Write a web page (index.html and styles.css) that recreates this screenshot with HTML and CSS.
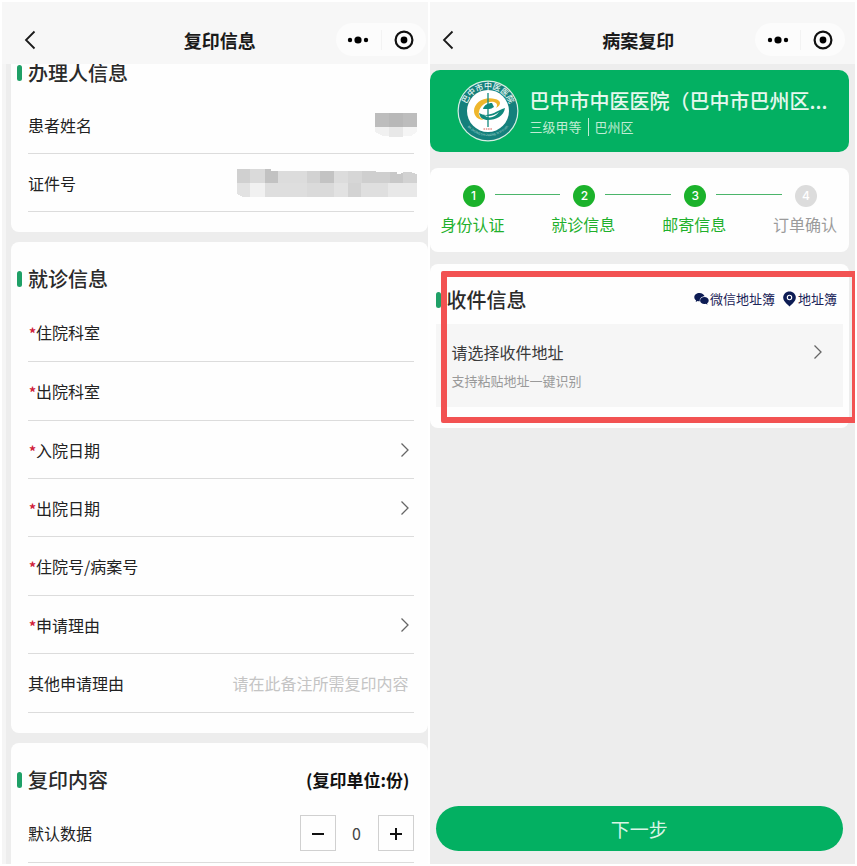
FILE: index.html
```html
<!DOCTYPE html>
<html lang="zh-CN">

<head>
    <title>病案复印</title>
    <meta charset="UTF-8">
    <meta name="viewport" content="width=device-width, initial-scale=1">
    <link rel="stylesheet" href="styles.css">
</head>

<body>
    <svg width="0" height="0" class="sprite" aria-hidden="true">
        <symbol id="icon-back" viewBox="0 0 12 20">
            <path d="M10.500 1.500 2 10l8.500 8.500" fill="none" stroke="#1a1a1a" stroke-width="1.800" />
        </symbol>
        <symbol id="icon-arrow" viewBox="0 0 10 16">
            <path d="M1.500 1.500 8 8l-6.500 6.500" fill="none" stroke="#666" stroke-width="1.300" />
        </symbol>
        <symbol id="icon-more" viewBox="0 0 22 20">
            <circle cx="3" cy="10" r="2.200" />
            <circle cx="11" cy="10" r="3.600" />
            <circle cx="19" cy="10" r="2.200" />
        </symbol>
        <symbol id="icon-close" viewBox="0 0 20 20">
            <circle cx="10" cy="10" r="8.400" fill="none" stroke="#111" stroke-width="2.200" />
            <circle cx="10" cy="10" r="3.400" />
        </symbol>
    </svg>

    <main class="screens">
        <section class="phone phone-left">
            <header class="navbar">
                <button class="back" type="button" aria-label="返回"><svg width="12" height="20"><use href="#icon-back" /></svg></button>
                <h1 class="navbar-title">复印信息</h1>
                <div class="capsule">
                    <button type="button" aria-label="更多"><svg width="22" height="20"><use href="#icon-more" /></svg></button>
                    <button type="button" aria-label="关闭"><svg width="20" height="20"><use href="#icon-close" /></svg></button>
                </div>
            </header>

            <form class="scroll" autocomplete="off">
                <div class="card card-scrolled">
                    <h2 class="card-title">办理人信息</h2>
                    <div class="row">
                        <span>患者姓名</span>
                        <svg class="mosaic" width="42" height="24" viewBox="0 0 42 24" shape-rendering="crispEdges" role="img" aria-label="已隐藏">
                            <path fill="#bdbdbd" d="M0 0h42v14H0z" />
                            <path fill="#b8b8b8" d="M14 0h14v14H14z" />
                            <path fill="#f1f1f1" d="M0 14h14v9H8l-8-4z" />
                            <path fill="#e8e8e8" d="M14 14h14v10H14z" />
                            <path fill="#f5f5f5" d="M28 14h14v5l-6 4h-8z" />
                        </svg>
                    </div>
                    <div class="row">
                        <span>证件号</span>
                        <svg class="mosaic" width="180" height="28" viewBox="0 0 180 28" shape-rendering="crispEdges" role="img" aria-label="已隐藏">
                            <path fill="#d0d0d0" d="M0 0h13v14H0z" />
                            <path fill="#dadada" d="M13 0h15v14H13z" />
                            <path fill="#c2c2c2" d="M28 0h6v2h7v12H28z" />
                            <path fill="#dcdcdc" d="M41 2h29v12H41z" />
                            <path fill="#d2d2d2" d="M70 2h13v12H70z" />
                            <path fill="#c3c3c3" d="M83 2h14v12H83z" />
                            <path fill="#dcdcdc" d="M97 2h14v12H97z" />
                            <path fill="#d6d6d6" d="M111 2h14v12h-14z" />
                            <path fill="#cfcfcf" d="M125 2l28 1v11h-28z" />
                            <path fill="#c8c8c8" d="M153 3h7v2h4v-1h2v10h-13z" />
                            <path fill="#d2d2d2" d="M166 3h7l7 2v9h-14z" />
                            <path fill="#e2e2e2" d="M0 14h13v14H6l-6-3z" />
                            <path fill="#f1f1f1" d="M13 14h15v14H13z" />
                            <path fill="#dedede" d="M28 14h42v14H28z" />
                            <path fill="#dadada" d="M70 14h27v14H70z" />
                            <path fill="#e2e2e2" d="M97 14h14v14H97z" />
                            <path fill="#d3d3d3" d="M111 14h13v14h-13z" />
                            <path fill="#dfdfdf" d="M124 14h27v14h-27z" />
                            <path fill="#e8e8e8" d="M151 14h29v14h-29z" />
                        </svg>
                    </div>
                </div>

                <div class="card">
                    <h2 class="card-title">就诊信息</h2>
                    <div class="row row-input">
                        <label for="inDept"><i class="star">*</i>住院科室</label>
                        <input type="text" id="inDept" name="in_dept" required>
                    </div>
                    <div class="row row-input">
                        <label for="outDept"><i class="star">*</i>出院科室</label>
                        <input type="text" id="outDept" name="out_dept" required>
                    </div>
                    <button class="row row-link" type="button">
                        <span><i class="star">*</i>入院日期</span>
                        <svg width="10" height="16"><use href="#icon-arrow" /></svg>
                    </button>
                    <button class="row row-link" type="button">
                        <span><i class="star">*</i>出院日期</span>
                        <svg width="10" height="16"><use href="#icon-arrow" /></svg>
                    </button>
                    <div class="row row-input">
                        <label for="caseNo"><i class="star">*</i>住院号/病案号</label>
                        <input type="text" id="caseNo" name="case_no" required>
                    </div>
                    <button class="row row-link" type="button">
                        <span><i class="star">*</i>申请理由</span>
                        <svg width="10" height="16"><use href="#icon-arrow" /></svg>
                    </button>
                    <div class="row row-input">
                        <label for="otherReason">其他申请理由</label>
                        <input type="text" id="otherReason" name="other_reason" placeholder="请在此备注所需复印内容">
                    </div>
                </div>

                <div class="card">
                    <div class="card-head">
                        <h2 class="card-title">复印内容</h2>
                        <span class="unit">(复印单位:份)</span>
                    </div>
                    <div class="row row-input">
                        <span>默认数据</span>
                        <div class="stepper">
                            <button type="button" aria-label="减少"><svg width="14" height="14" viewBox="0 0 14 14"><path d="M1 8h12" stroke="#111" stroke-width="2" /></svg></button>
                            <output>0</output>
                            <button type="button" aria-label="增加"><svg width="14" height="14" viewBox="0 0 14 14"><path d="M1 8h12M7 2v12" stroke="#111" stroke-width="2" /></svg></button>
                        </div>
                    </div>
                </div>
            </form>
        </section>

        <section class="phone phone-right">
            <header class="navbar">
                <button class="back" type="button" aria-label="返回"><svg width="12" height="20"><use href="#icon-back" /></svg></button>
                <h1 class="navbar-title">病案复印</h1>
                <div class="capsule">
                    <button type="button" aria-label="更多"><svg width="22" height="20"><use href="#icon-more" /></svg></button>
                    <button type="button" aria-label="关闭"><svg width="20" height="20"><use href="#icon-close" /></svg></button>
                </div>
            </header>

            <div class="content">
                <div class="hospital">
                    <svg class="logo" width="62" height="62" viewBox="0 0 62 62" role="img" aria-label="医院标志">
                        <defs>
                            <path id="arcTop" d="M9.500 38A22.500 22.500 0 1 1 52.500 38" />
                            <path id="arcBottom" d="M5.500 38A27 27 0 0 0 56.500 38" />
                        </defs>
                        <circle cx="31" cy="31" r="30.500" fill="#d7efe4" />
                        <circle cx="31" cy="31" r="29.300" fill="#14807c" />
                        <circle cx="31" cy="31" r="21" fill="#fff" />
                        <text class="logo-cn"><textPath href="#arcTop" startOffset="50%">巴中市中医医院</textPath></text>
                        <text class="logo-en"><textPath href="#arcBottom" startOffset="50%">BA ZHONG SHI ZHONG YI YI YUAN</textPath></text>
                        <path fill="#eeb62c" d="M38 19c-10-3-21 3-21 12 0 5 4 9 10 9-4-2-6-5-5-8 1-6 7-11 15-10 3 1 4 3 2 6 6-3 5-8-1-9z" />
                        <path fill="#10897d" d="M26 29c1-4 5-6 9-6l2 4c-2 1-3 2-5 2z" />
                        <path fill="#10897d" d="M22 33c5 3 10 2 15 0 4-2 7-4 11-5-1 8-9 12-17 12-5 0-8-2-9-7zM27 35c4 2 10 1 15-3-4 6-11 7-15 3z" fill-rule="evenodd" />
                        <path stroke="#10897d" stroke-width="1.300" d="M31 13v34" />
                        <path stroke="#d8574e" stroke-dasharray="1.500 .8" d="M26.500 49h9" />
                    </svg>
                    <div class="hospital-info">
                        <h2 class="hospital-name">巴中市中医医院（巴中市巴州区...</h2>
                        <p class="hospital-meta"><span>三级甲等</span><span>巴州区</span></p>
                    </div>
                </div>

                <ol class="steps">
                    <li class="step done"><div class="step-head"><b>1</b></div>身份认证</li>
                    <li class="step done"><div class="step-head"><b>2</b></div>就诊信息</li>
                    <li class="step done"><div class="step-head"><b>3</b></div>邮寄信息</li>
                    <li class="step"><div class="step-head"><b>4</b></div>订单确认</li>
                </ol>

                <div class="address">
                    <div class="card">
                        <div class="card-head">
                            <h2 class="card-title">收件信息</h2>
                            <nav class="books">
                                <a href="#"><svg width="15" height="14" viewBox="0 0 15 14"><path fill="#0d1c54" d="M5.500 1C2.500 1 .3 2.800.3 5.200c0 1.300.7 2.400 1.800 3.200L1.700 10l1.900-1c.6.200 1.200.3 1.900.3h.3C5.300 6.400 7.600 4.200 10.600 4.200 10 2.300 8 1 5.500 1z" /><path fill="#0d1c54" d="M10.400 4.900c-2.400 0-4.300 1.500-4.300 3.500s1.900 3.600 4.300 3.600c.5 0 1-.1 1.500-.2l1.600.9-.4-1.400c1-.7 1.600-1.700 1.600-2.900 0-2-1.900-3.500-4.300-3.500z" /></svg>微信地址簿</a>
                                <a href="#"><svg width="15" height="16" viewBox="0 0 15 16"><path fill="#0d1c54" d="M7.500.5C3.900.5 1.200 3.200 1.200 6.600c0 3.300 3 6 6.300 8.900 3.300-2.900 6.300-5.600 6.300-8.900C13.800 3.200 11.100.5 7.500.5z" /><circle cx="7.500" cy="6.500" r="2.200" fill="#0d1c54" stroke="#fff" stroke-width="1.100" /></svg>地址簿</a>
                            </nav>
                        </div>
                        <button class="picker" type="button">
                            <span class="picker-text">
                                <span>请选择收件地址</span>
                                <small>支持粘贴地址一键识别</small>
                            </span>
                            <svg width="10" height="16"><use href="#icon-arrow" /></svg>
                        </button>
                    </div>
                    <div class="highlight"></div>
                </div>

                <button class="next" type="button">下一步</button>
            </div>
        </section>
    </main>
</body>

</html>
```

FILE: styles.css
```css
* {
    box-sizing: border-box;
}

body {
    margin: 0;
    background-color: #fff;
    color: #222;
    font-family: "Noto Sans CJK SC", sans-serif;
    font-size: 16px;
}

h1, h2, p, ol {
    margin: 0;
    padding: 0;
}

button, input {
    font: inherit;
    color: inherit;
    border: none;
    background: none;
    padding: 0;
}

button {
    cursor: pointer;
}

svg {
    display: block;
    flex: none;
}

.sprite {
    position: absolute;
}

.screens {
    display: grid;
    grid-template-columns: 1fr 1fr;
    gap: 2px;
    height: 100vh;
    padding: 2px;
}

.phone {
    display: flex;
    flex-direction: column;
    min-width: 0;
    min-height: 0;
    overflow: hidden;
    background-color: #ededed;
}

/* Navbar */
.navbar {
    display: grid;
    grid-template-columns: 90px 1fr 90px;
    align-items: center;
    flex: none;
    padding: 21px 2px 8px 12px;
    background-color: #f7f7f7;
}

.phone-right .navbar {
    padding-left: 2px;
    padding-right: 10px;
}

.back {
    justify-self: start;
    padding-left: 10px;
}

.navbar-title {
    font-size: 18px;
    line-height: 24px;
    font-weight: 700;
    text-align: center;
    color: #1a1a1a;
}

.capsule {
    display: grid;
    grid-template-columns: 1fr 1fr;
    height: 33px;
    align-items: center;
    background-color: #fcfcfc;
    border-radius: 17px;
}

.capsule button {
    display: flex;
    justify-content: center;
}

.capsule button + button {
    border-left: 1px solid #f3f3f3;
}

/* Cards */
.scroll {
    flex: 1;
    display: flex;
    flex-direction: column;
    gap: 10px;
    min-height: 0;
    overflow: hidden;
    padding-left: 5px;
    border-left: 4px solid #f5f5f5;
}

.card {
    flex: none;
    padding: 23px 14px 20px 6px;
    background-color: #fefefe;
    border-radius: 8px;
}

.card-scrolled {
    margin-top: -28px;
}

.card-head {
    display: flex;
    align-items: center;
    justify-content: space-between;
}

.card-title {
    display: flex;
    align-items: center;
    gap: 6px;
    font-size: 20px;
    line-height: 28px;
    font-weight: 500;
    color: #2b2b2b;
}

.card-title::before {
    content: "";
    width: 5px;
    height: 16px;
    border-radius: 3px;
    background-color: #1fa067;
}

.unit {
    padding-right: 4px;
    font-size: 17px;
    line-height: 24px;
    font-weight: 700;
    color: #111;
}

.row {
    display: flex;
    align-items: center;
    justify-content: space-between;
    height: 58px;
    margin-left: 11px;
    border-bottom: 1px solid #dcdcdc;
}

.card-title + .row,
.card-head + .row {
    margin-top: 10px;
}

.card-scrolled .card-title + .row {
    margin-top: 9px;
}

.row-input {
    height: 59px;
}

.row-input input {
    flex: 1;
    min-width: 0;
    padding-right: 5px;
    text-align: right;
    outline: none;
}

.row-input input::placeholder {
    color: #c4c4c4;
    opacity: 1;
}

.row-link {
    width: calc(100% - 11px);
    padding-right: 4px;
}

.star {
    display: inline-block;
    width: 8px;
    padding-left: 1px;
    font-size: 14px;
    line-height: 16px;
    font-style: normal;
    font-weight: 700;
    color: #d0203a;
}

.mosaic {
    margin-right: -3px;
}

.stepper {
    display: grid;
    grid-template-columns: 36px 42px 36px;
    align-items: center;
    text-align: center;
    color: #444;
}

.stepper button {
    display: flex;
    align-items: center;
    justify-content: center;
    height: 36px;
    border: 1px solid #d0d0d0;
}

/* Right screen */
.content {
    flex: 1;
    display: flex;
    flex-direction: column;
    padding: 6px 0 13px;
}

.hospital {
    display: flex;
    align-items: center;
    gap: 11px;
    margin: 0 6px 16px 0;
    padding: 10px 20px 10px 27px;
    border-radius: 10px;
    background-color: #03b062;
    color: #e6f8ee;
}

.hospital-info {
    min-width: 0;
}

.hospital-name {
    font-size: 20px;
    line-height: 30px;
    font-weight: 500;
    white-space: nowrap;
}

.hospital-meta {
    display: flex;
    gap: 6px;
    margin-top: 2px;
    font-size: 13px;
    line-height: 18px;
    color: #c0ecd4;
}

.hospital-meta span + span {
    padding-left: 6px;
    border-left: 1px solid #c0ecd4;
}

.logo-cn {
    fill: #e8f7f2;
    font-size: 8px;
    font-weight: 500;
    text-anchor: middle;
}

.logo-en {
    fill: #b5dcd4;
    font-size: 3px;
    text-anchor: middle;
}

.steps {
    display: grid;
    grid-template-columns: 1fr 1fr 1fr 65px;
    margin: 0 6px 12px 0;
    padding: 16px 11px;
    border-radius: 8px;
    background-color: #fefefe;
    list-style: none;
}

.step {
    line-height: 24px;
    white-space: nowrap;
    color: #9b9b9b;
}

.step-head {
    display: flex;
    align-items: center;
    gap: 10px;
    height: 24px;
    margin-bottom: 4px;
    padding-left: 22px;
}

.step-head b {
    width: 22px;
    height: 22px;
    border-radius: 50%;
    background-color: #dcdcdc;
    color: #fff;
    font-family: Inter, sans-serif;
    font-size: 12px;
    line-height: 22px;
    font-weight: 500;
    text-align: center;
}

.done {
    color: #1fb02c;
}

.done b {
    background-color: #1bb22b;
}

.done .step-head::after {
    content: "";
    flex: 1;
    height: 1px;
    margin: 0 -9px 3px 0;
    background-color: #4bb56a;
}

.address {
    position: relative;
}

.address .card {
    margin-right: 6px;
    padding: 22px 6px 21px;
}

.highlight {
    position: absolute;
    inset: 7px -3px 5px 11px;
    border: 6px solid #f25252;
    border-radius: 2px;
    pointer-events: none;
}

.books {
    display: flex;
    gap: 7px;
    padding: 0 6px 2px 0;
}

.books a {
    display: flex;
    align-items: center;
    gap: 1px;
    font-size: 13px;
    line-height: 20px;
    color: #1b2458;
    text-decoration: none;
}

.picker {
    display: flex;
    align-items: center;
    justify-content: space-between;
    width: 100%;
    margin-top: 10px;
    padding: 14px 20px 16px 16px;
    background-color: #f6f6f6;
    text-align: left;
    color: #3a3a3a;
}

.picker-text {
    display: grid;
    gap: 5px;
    line-height: 28px;
}

.picker small {
    font-size: 13px;
    line-height: 20px;
    color: #9a9a9a;
}

.picker svg {
    align-self: flex-start;
    margin-top: 6px;
}

.next {
    height: 45px;
    margin: auto 12px 0 6px;
    border-radius: 23px;
    background-color: #03b062;
    color: #d9f5e6;
    font-size: 19px;
}
```
